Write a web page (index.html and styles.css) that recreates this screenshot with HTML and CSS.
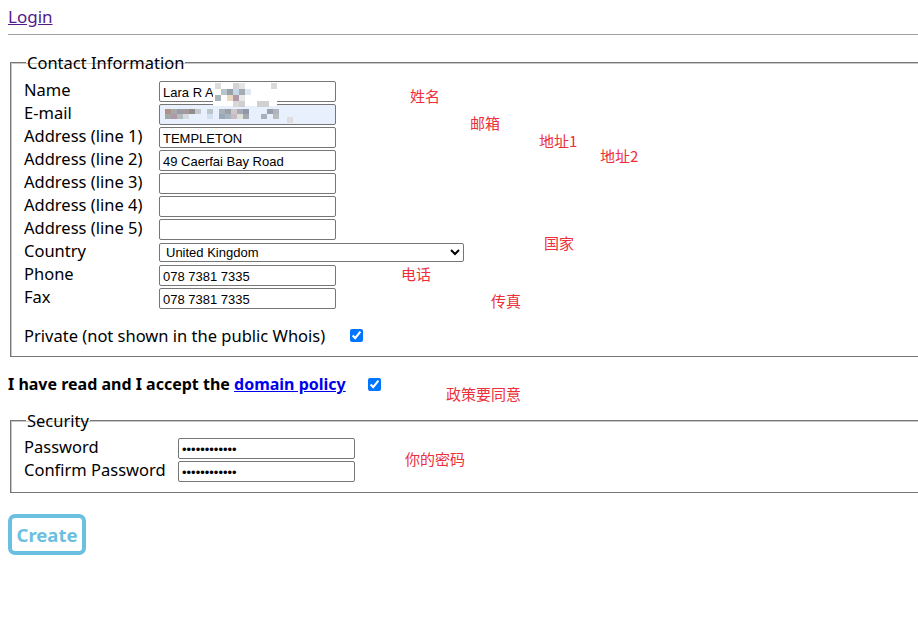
FILE: index.html
```html
<!DOCTYPE html>
<html lang="en">

<head>
    <meta charset="UTF-8">
    <meta name="viewport" content="width=device-width, initial-scale=1.0">
    <title>Create account</title>
    <link rel="stylesheet" href="styles.css">
</head>

<body>
    <div class="top">
        <a class="login" href="#login">Login</a>
    </div>
    <hr class="rule">

    <form class="signup">
        <fieldset class="group contact">
            <legend>Contact Information</legend>
            <div class="rows">
                <label for="name">Name</label>
                <input class="field" id="name" type="text" value="Lara R A">
                <label for="email">E-mail</label>
                <input class="field autofill" id="email" type="text" value="">
                <label for="addr1">Address (line 1)</label>
                <input class="field" id="addr1" type="text" value="TEMPLETON">
                <label for="addr2">Address (line 2)</label>
                <input class="field" id="addr2" type="text" value="49 Caerfai Bay Road">
                <label for="addr3">Address (line 3)</label>
                <input class="field" id="addr3" type="text">
                <label for="addr4">Address (line 4)</label>
                <input class="field" id="addr4" type="text">
                <label for="addr5">Address (line 5)</label>
                <input class="field" id="addr5" type="text">
                <label for="country">Country</label>
                <select class="country" id="country">
                    <option>United Kingdom</option>
                </select>
                <label for="phone">Phone</label>
                <input class="field" id="phone" type="text" value="078 7381 7335">
                <label for="fax">Fax</label>
                <input class="field" id="fax" type="text" value="078 7381 7335">
            </div>
            <div class="private">
                <label for="private">Private (not shown in the public Whois)</label>
                <input class="check" id="private" type="checkbox" checked>
            </div>
        </fieldset>

        <div class="policy">
            <span>I have read and I accept the <a href="#policy">domain policy</a></span>
            <input class="check" type="checkbox" checked>
        </div>

        <fieldset class="group security">
            <legend>Security</legend>
            <div class="rows">
                <label for="pass">Password</label>
                <input class="field" id="pass" type="password" value="aaaaaaaaaaaa">
                <label for="pass2">Confirm Password</label>
                <input class="field" id="pass2" type="password" value="aaaaaaaaaaaa">
            </div>
        </fieldset>

        <button class="create" type="button">Create</button>
    </form>

    <!-- pixelated blur over personal data -->
    <svg class="mosaic" width="140" height="48" viewBox="0 0 140 48">
        <rect x="56" y="4" width="64" height="24" fill="#fff"/>
        <rect x="58" y="5" width="6" height="6" fill="#dcdcdc"/>
        <rect x="76" y="5" width="6" height="6" fill="#d4d4d4"/>
        <rect x="82" y="5" width="6" height="6" fill="#e4e4e4"/>
        <rect x="114" y="5" width="6" height="6" fill="#dadada"/>
        <rect x="64" y="11" width="6" height="6" fill="#b8c4cc"/>
        <rect x="70" y="11" width="6" height="6" fill="#9aa0a8"/>
        <rect x="76" y="11" width="6" height="6" fill="#c4d8e6"/>
        <rect x="82" y="11" width="6" height="6" fill="#a6aab2"/>
        <rect x="88" y="11" width="6" height="6" fill="#dfe8f0"/>
        <rect x="58" y="17" width="6" height="6" fill="#a8b4bc"/>
        <rect x="70" y="17" width="6" height="6" fill="#ead8c4"/>
        <rect x="76" y="17" width="6" height="6" fill="#b09aa8"/>
        <rect x="82" y="17" width="6" height="6" fill="#e8e8e8"/>
        <rect x="76" y="23" width="6" height="6" fill="#d8d8d8"/>
        <rect x="82" y="23" width="6" height="6" fill="#cfcfcf"/>
        <rect x="100" y="23" width="12" height="6" fill="#d0d0d0"/>
        <rect x="8" y="31" width="6" height="5" fill="#b09088"/>
        <rect x="14" y="31" width="6" height="5" fill="#a8a8a8"/>
        <rect x="20" y="31" width="6" height="5" fill="#9a9aa8"/>
        <rect x="26" y="31" width="6" height="5" fill="#a89898"/>
        <rect x="32" y="31" width="6" height="5" fill="#8e8e8e"/>
        <rect x="38" y="31" width="6" height="5" fill="#c4c8cc"/>
        <rect x="50" y="31" width="6" height="5" fill="#bcc4cc"/>
        <rect x="62" y="31" width="6" height="5" fill="#a8b0b8"/>
        <rect x="68" y="31" width="6" height="5" fill="#9aa0a6"/>
        <rect x="74" y="31" width="6" height="5" fill="#d0c8c8"/>
        <rect x="80" y="31" width="6" height="5" fill="#a8a8b8"/>
        <rect x="86" y="31" width="6" height="5" fill="#8e98a8"/>
        <rect x="110" y="31" width="6" height="5" fill="#9aa0a8"/>
        <rect x="116" y="31" width="6" height="5" fill="#b0b4c0"/>
        <rect x="8" y="36" width="6" height="5" fill="#a0a8a8"/>
        <rect x="14" y="36" width="6" height="5" fill="#b098a8"/>
        <rect x="20" y="36" width="6" height="5" fill="#b4bcbc"/>
        <rect x="26" y="36" width="6" height="5" fill="#d4dce0"/>
        <rect x="50" y="36" width="6" height="5" fill="#d0e0f0"/>
        <rect x="62" y="36" width="6" height="5" fill="#9aa8b8"/>
        <rect x="68" y="36" width="6" height="5" fill="#a8b4c0"/>
        <rect x="74" y="36" width="6" height="5" fill="#c8bcc0"/>
        <rect x="80" y="36" width="6" height="5" fill="#e0e4d8"/>
        <rect x="86" y="36" width="6" height="5" fill="#a4a8b0"/>
        <rect x="104" y="36" width="6" height="5" fill="#a8b0bc"/>
        <rect x="116" y="36" width="6" height="5" fill="#b8bcbc"/>
        <rect x="130" y="39" width="6" height="6" fill="#dedede"/>
    </svg>

    <div class="notes">
        <span class="note n-name">姓名</span>
        <span class="note n-mail">邮箱</span>
        <span class="note n-addr1">地址1</span>
        <span class="note n-addr2">地址2</span>
        <span class="note n-country">国家</span>
        <span class="note n-phone">电话</span>
        <span class="note n-fax">传真</span>
        <span class="note n-policy">政策要同意</span>
        <span class="note n-pass">你的密码</span>
    </div>
</body>

</html>
```

FILE: styles.css
```css
body {
    font-family: "Noto Sans", "Open Sans", sans-serif;
    font-size: 16.5px;
    color: #000;
    margin: 8px 0 8px 8px;
    background-color: #fff;
}

.top {
    height: 20px;
    line-height: 18px;
}

.login {
    font-size: 17px;
    color: #551a8b;
}

.rule {
    border: 0;
    border-top: 1px solid #a0a0a0;
    margin: 6px 0 0;
}

.signup {
    margin-top: 17px;
}

.group {
    margin: 0 0 0 2px;
    padding: 0 13px 10px 13px;
    border: 1px solid #767676;
    border-right: none;
    box-shadow: inset 1px 1px 0 #c8c8c8;
}

.group legend {
    padding: 0 1px;
    margin-left: 2px;
    line-height: 21px;
}

.rows {
    display: grid;
    grid-template-columns: 135px auto;
    grid-auto-rows: 21px;
    row-gap: 2px;
    justify-content: start;
    align-items: center;
    margin-top: 8px;
}

.rows label {
    line-height: 18px;
    align-self: start;
}

.field {
    box-sizing: border-box;
    width: 177px;
    height: 21px;
    margin: 0;
    padding: 1px 3px 0;
    border: 1px solid #767676;
    border-radius: 2px;
    font-family: "Liberation Sans", Arial, sans-serif;
    font-size: 13px;
    color: #000;
    background-color: #fff;
}

.field.autofill {
    background-color: #e8f0fe;
}

.country {
    box-sizing: border-box;
    width: 305px;
    height: 19px;
    margin: 0;
    padding: 0 2px;
    border: 1px solid #767676;
    border-radius: 2px;
    font-family: "Liberation Sans", Arial, sans-serif;
    font-size: 13px;
    background-color: #fff;
}

.private {
    display: flex;
    align-items: center;
    margin-top: 15px;
    height: 22px;
}

.check {
    width: 13px;
    height: 13px;
    margin: 0 0 0 25px;
    accent-color: #0075ff;
}

.policy {
    display: flex;
    align-items: center;
    height: 22px;
    margin: 16px 0 0;
    font-size: 16px;
    font-weight: bold;
}

.policy a {
    color: #0000ee;
}

.policy .check {
    margin-left: 22px;
}

.security {
    margin-top: 15px;
}

.security .rows {
    grid-template-columns: 154px auto;
    margin-top: 7px;
}

.create {
    display: block;
    box-sizing: border-box;
    width: 78px;
    height: 41px;
    margin-top: 21px;
    padding: 0 0 1px;
    border: 4px solid #6bbfdf;
    border-radius: 7px;
    background-color: #fff;
    color: #6cbfe0;
    font-family: "Noto Sans", "Open Sans", sans-serif;
    font-size: 18.5px;
    font-weight: bold;
}

.mosaic {
    position: absolute;
    left: 157px;
    top: 78px;
}

.notes {
    position: absolute;
    left: 0;
    top: 0;
}

.note {
    position: absolute;
    font-family: "Noto Sans CJK SC", sans-serif;
    font-size: 15px;
    line-height: 17px;
    color: #ec2f3b;
    white-space: nowrap;
}

.n-name { left: 410px; top: 87px; }
.n-mail { left: 470px; top: 114px; }
.n-addr1 { left: 539px; top: 132px; }
.n-addr2 { left: 600px; top: 147px; }
.n-country { left: 544px; top: 234px; }
.n-phone { left: 401px; top: 265px; }
.n-fax { left: 491px; top: 292px; }
.n-policy { left: 446px; top: 385px; }
.n-pass { left: 405px; top: 450px; }
```
